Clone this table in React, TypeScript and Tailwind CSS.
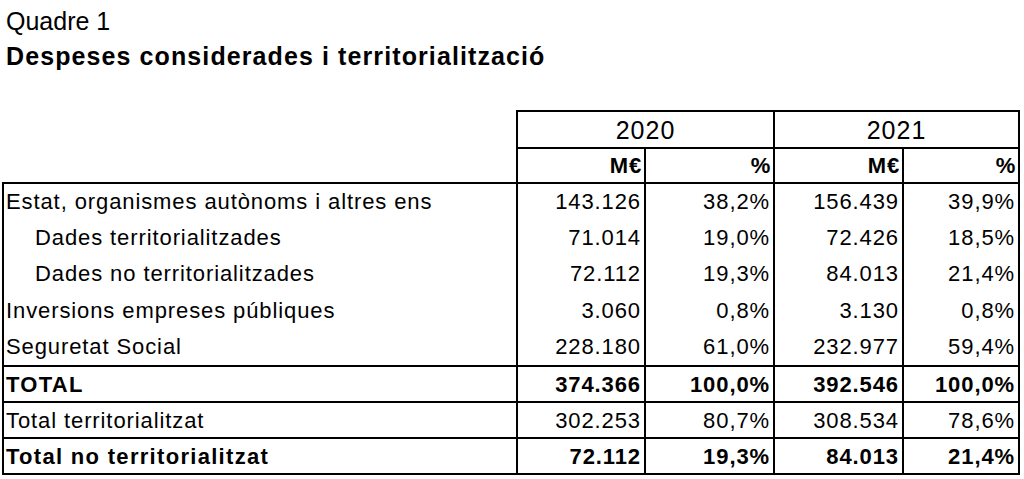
type Row = {
  label: string;
  values: string[];
  indent?: boolean;
  bold?: boolean;
  cls: string;
};

const rows: Row[] = [
  { label: 'Estat, organismes autònoms i altres ens', values: ['143.126', '38,2%', '156.439', '39,9%'], cls: 'h-[37px] border-t-2' },
  { label: 'Dades territorialitzades', values: ['71.014', '19,0%', '72.426', '18,5%'], indent: true, cls: 'h-[36px]' },
  { label: 'Dades no territorialitzades', values: ['72.112', '19,3%', '84.013', '21,4%'], indent: true, cls: 'h-[37px]' },
  { label: 'Inversions empreses públiques', values: ['3.060', '0,8%', '3.130', '0,8%'], cls: 'h-[36px]' },
  { label: 'Seguretat Social', values: ['228.180', '61,0%', '232.977', '59,4%'], cls: 'h-[37px]' },
  { label: 'TOTAL', values: ['374.366', '100,0%', '392.546', '100,0%'], bold: true, cls: 'h-[36px] border-t-2' },
  { label: 'Total territorialitzat', values: ['302.253', '80,7%', '308.534', '78,6%'], cls: 'h-[36px] border-t-2' },
  { label: 'Total no territorialitzat', values: ['72.112', '19,3%', '84.013', '21,4%'], bold: true, cls: 'h-[38px] border-y-2' },
];

const cols = 'grid grid-cols-[514px_128px_129px_129px_118px]';

export default function App() {
  return (
    <div className="w-[1024px] h-[479px] overflow-hidden bg-white text-black font-['Liberation_Sans',Arial,sans-serif]">
      {/* Títol */}
      <div className="pt-[7px] pl-[6px] text-[25px] leading-[28px]">Quadre 1</div>
      <div className="mt-[7px] pl-[6px] text-[25px] leading-[28px] font-bold tracking-[1.1px]">
        Despeses considerades i territorialització
      </div>

      <div className="mt-[40px] ml-[2px] w-[1018px]">
        {/* Capçalera anys */}
        <div className={`${cols} h-[37px]`}>
          <div />
          <div className="col-span-2 flex items-center justify-center border-t-2 border-l-2 border-black text-[25px] tracking-[1px]">
            2020
          </div>
          <div className="col-span-2 flex items-center justify-center border-t-2 border-x-2 border-black text-[25px] tracking-[1px]">
            2021
          </div>
        </div>
        {/* Capçalera unitats */}
        <div className={`${cols} h-[35px]`}>
          <div />
          {['M€', '%', 'M€', '%'].map((h, i) => (
            <div
              key={i}
              className={`flex items-center justify-end pr-[2px] border-t-2 border-l-2 border-black text-[22px] font-bold tracking-[0.8px] ${
                i === 3 ? 'border-r-2' : ''
              }`}
            >
              {h}
            </div>
          ))}
        </div>

        {/* Files */}
        {rows.map((r) => (
          <div
            key={r.label}
            className={`${cols} ${r.cls} border-black text-[22px] tracking-[0.9px] ${r.bold ? 'font-bold' : ''}`}
          >
            <div
              className={`flex items-center border-l-2 border-black ${r.indent ? 'pl-[31px]' : 'pl-[2px]'} ${
                r.bold ? 'tracking-[1.3px]' : ''
              }`}
            >
              {r.label}
            </div>
            {r.values.map((v, i) => (
              <div
                key={i}
                className={`flex items-center justify-end pr-[3px] border-l-2 border-black ${i === 3 ? 'border-r-2' : ''}`}
              >
                {v}
              </div>
            ))}
          </div>
        ))}
      </div>
    </div>
  );
}
